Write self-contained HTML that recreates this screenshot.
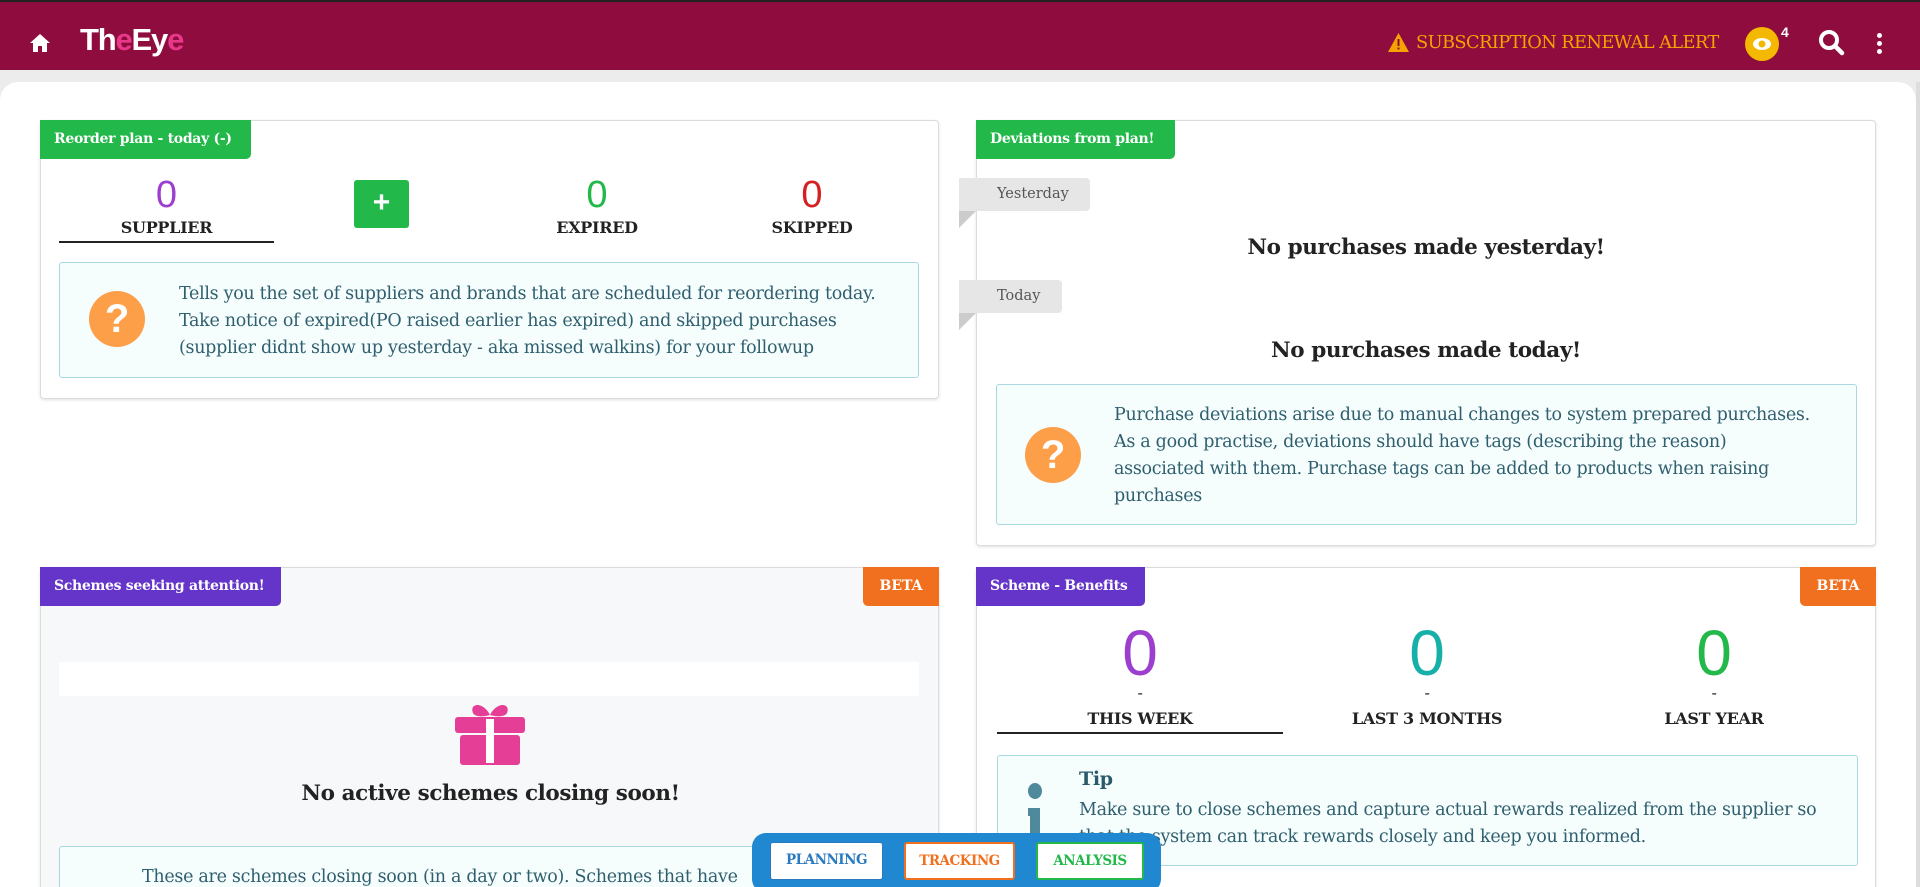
<!DOCTYPE html>
<html><head><meta charset="utf-8"><style>
*{box-sizing:border-box;margin:0;padding:0}
html,body{width:1920px;height:887px;overflow:hidden}
body{background:#ececec;font-family:"DejaVu Serif","Liberation Serif",serif;color:#222;position:relative}
.hdr{position:absolute;left:0;top:0;width:1920px;height:70px;background:#8f0d3e;border-top:2px solid #222}
.panel{position:absolute;left:0;top:82px;width:1916px;height:805px;background:#fff;border-radius:18px 18px 0 0}
.card{position:absolute;background:#fff;border:1px solid #dcdcdc;border-radius:4px;box-shadow:0 1px 3px rgba(0,0,0,.12)}
.tab{position:absolute;top:-1px;left:-1px;height:39px;color:#fff;font-weight:bold;font-size:14px;line-height:39px;padding:0 14px;border-radius:0 0 5px 0;letter-spacing:-.3px}
.beta{position:absolute;top:-1px;right:-1px;height:39px;width:76px;background:#f07020;color:#fff;font-weight:bold;font-size:14px;line-height:39px;text-align:center;border-radius:0 0 0 5px}
.abs{position:absolute}
.num{position:absolute;text-align:center;font-size:38px;font-family:"Liberation Sans",sans-serif;font-weight:300}
.lbl{position:absolute;text-align:center;font-size:16px;font-weight:bold;letter-spacing:-.3px}
.info{position:absolute;background:#f5fdfd;border:1.5px solid #a9d8e0;border-radius:3px;color:#2f5f6e;font-size:17.5px;line-height:27px;letter-spacing:-.3px}
.q{position:absolute;width:56px;height:56px;border-radius:50%;background:#fd9f48;color:#fff;font:bold 40px/56px "Liberation Sans",sans-serif;text-align:center}
.tag{position:absolute;background:#e6e6e6;color:#555;font-size:14.5px;line-height:33px;padding-left:38px;border-radius:0 4px 4px 0}
.tag:after{content:"";position:absolute;left:0;top:33px;border-left:17px solid #ccc;border-bottom:17px solid transparent}
.big{position:absolute;text-align:center;font-size:21.5px;font-weight:bold;letter-spacing:-.4px}
.nb{position:absolute;top:9px;height:38px;background:#fff;border-radius:3px;font:bold 13.5px/34px "DejaVu Serif",serif;text-align:center;letter-spacing:-.5px}
</style></head><body>
<div class="hdr">
 <svg class="abs" style="left:29px;top:31px" width="22" height="20" viewBox="0 0 22 20"><path d="M11 1L1 10h3v9h5v-6h4v6h5v-9h3z" fill="#fff"/></svg>
 <div class="abs" style="left:80px;top:20px;font:bold 31px/36px 'Liberation Sans',sans-serif;color:#fff;letter-spacing:-1.2px">Th<span style="color:#e8388a">e</span>Ey<span style="color:#e8388a">e</span></div>
 <svg class="abs" style="left:1388px;top:31px" width="21" height="19" viewBox="0 0 21 19"><path d="M10.5 0L21 19H0z" fill="#f5a300"/><rect x="9.5" y="6" width="2" height="7" fill="#8f0d3e"/><rect x="9.5" y="14.5" width="2" height="2" fill="#8f0d3e"/></svg>
 <div class="abs" style="left:1416px;top:29px;font:17.8px/24px 'DejaVu Serif',serif;color:#f5a300;letter-spacing:-.6px">SUBSCRIPTION RENEWAL ALERT</div>
 <div class="abs" style="left:1745px;top:25px;width:34px;height:34px;border-radius:50%;background:#f5b800"></div>
 <svg class="abs" style="left:1752px;top:34px" width="20" height="16" viewBox="0 0 20 16"><ellipse cx="10" cy="8" rx="9" ry="6" fill="#fff"/><circle cx="10" cy="8" r="3.5" fill="#f5b800"/></svg>
 <div class="abs" style="left:1781px;top:22px;font:bold 14px 'Liberation Sans',sans-serif;color:#fff">4</div>
 <svg class="abs" style="left:1818px;top:27px" width="27" height="27" viewBox="0 0 27 27"><circle cx="11" cy="11" r="8" stroke="#fff" stroke-width="4" fill="none"/><path d="M17 17l7 7" stroke="#fff" stroke-width="4.5" stroke-linecap="round"/></svg>
 <div class="abs" style="left:1877px;top:31px;width:5px;height:5px;border-radius:50%;background:#fff;box-shadow:0 8px 0 #fff,0 16px 0 #fff"></div>
</div>
<div class="panel"></div>
<div class="abs" style="left:1916px;top:82px;width:4px;height:805px;background:#ddd"></div>

<!-- card 1 -->
<div class="card" style="left:40px;top:120px;width:899px;height:279px">
 <div class="tab" style="background:#22b84a;width:211px">Reorder plan - today (-)</div>
 <div class="num" style="left:18px;width:215px;top:53px;color:#9c3fcf">0</div>
 <div class="lbl" style="left:18px;width:215px;top:97px">SUPPLIER</div>
 <div class="abs" style="left:18px;top:120px;width:215px;height:2px;background:#222"></div>
 <div class="abs" style="left:313px;top:59px;width:55px;height:48px;background:#22b84a;border-radius:3px;color:#fff;font:bold 30px/46px 'Liberation Sans',sans-serif;text-align:center">+</div>
 <div class="num" style="left:450px;width:212px;top:53px;color:#22b84a">0</div>
 <div class="lbl" style="left:450px;width:212px;top:97px">EXPIRED</div>
 <div class="num" style="left:665px;width:212px;top:53px;color:#d42020">0</div>
 <div class="lbl" style="left:665px;width:212px;top:97px">SKIPPED</div>
 <div class="info" style="left:18px;top:141px;width:860px;height:116px">
  <div class="q" style="left:29px;top:28px">?</div>
  <div class="abs" style="left:119px;top:18px;width:730px">Tells you the set of suppliers and brands that are scheduled for reordering today. Take notice of expired(PO raised earlier has expired) and skipped purchases (supplier didnt show up yesterday - aka missed walkins) for your followup</div>
 </div>
</div>

<!-- card 2 -->
<div class="card" style="left:976px;top:120px;width:900px;height:426px">
 <div class="tab" style="background:#22b84a;width:199px">Deviations from plan!</div>
</div>
<div class="tag" style="left:959px;top:178px;width:131px">Yesterday</div>
<div class="big" style="left:976px;width:900px;top:235px">No purchases made yesterday!</div>
<div class="tag" style="left:959px;top:280px;width:103px">Today</div>
<div class="big" style="left:976px;width:900px;top:338px">No purchases made today!</div>
<div class="info" style="left:996px;top:384px;width:861px;height:141px">
 <div class="q" style="left:28px;top:42px">?</div>
 <div class="abs" style="left:117px;top:17px;width:700px">Purchase deviations arise due to manual changes to system prepared purchases. As a good practise, deviations should have tags (describing the reason) associated with them. Purchase tags can be added to products when raising purchases</div>
</div>

<!-- card 3 -->
<div class="card" style="left:40px;top:567px;width:899px;height:330px;background:#f7f8fa">
 <div class="tab" style="background:#6535c9;width:241px">Schemes seeking attention!</div>
 <div class="beta">BETA</div>
 <div class="abs" style="left:18px;top:94px;width:860px;height:34px;background:#fff"></div>
 <svg class="abs" style="left:412px;top:133px" width="74" height="64" viewBox="0 0 74 64"><path d="M37 14C30 0 16 2 20 12c2 4 10 4 17 2zM37 14C44 0 58 2 54 12c-2 4-10 4-17 2z" fill="#e53e97"/><rect x="2" y="16" width="70" height="16" rx="3" fill="#e53e97"/><rect x="7" y="34" width="60" height="30" rx="3" fill="#e53e97"/><rect x="33" y="18" width="8" height="44" fill="#fff"/></svg>
 <div class="big" style="left:0;width:899px;top:213px">No active schemes closing soon!</div>
 <div class="info" style="left:18px;top:278px;width:860px;height:80px"><div class="abs" style="left:82px;top:17px;width:760px">These are schemes closing soon (in a day or two). Schemes that have</div></div>
</div>

<!-- card 4 -->
<div class="card" style="left:976px;top:567px;width:900px;height:330px">
 <div class="tab" style="background:#6535c9;width:169px">Scheme - Benefits</div>
 <div class="beta">BETA</div>
 <div class="num" style="left:20px;width:286px;top:48px;font-size:64px;color:#9c3fcf">0</div>
 <div class="num" style="left:307px;width:286px;top:48px;font-size:64px;color:#16b0a8">0</div>
 <div class="num" style="left:594px;width:286px;top:48px;font-size:64px;color:#22b84a">0</div>
 <div class="lbl" style="left:20px;width:286px;top:115px;font-weight:normal">-</div>
 <div class="lbl" style="left:307px;width:286px;top:115px;font-weight:normal">-</div>
 <div class="lbl" style="left:594px;width:286px;top:115px;font-weight:normal">-</div>
 <div class="lbl" style="left:20px;width:286px;top:141px">THIS WEEK</div>
 <div class="lbl" style="left:307px;width:286px;top:141px">LAST 3 MONTHS</div>
 <div class="lbl" style="left:594px;width:286px;top:141px">LAST YEAR</div>
 <div class="abs" style="left:20px;top:164px;width:286px;height:2px;background:#222"></div>
 <div class="info" style="left:20px;top:187px;width:861px;height:111px">
  <svg class="abs" style="left:27px;top:26px" width="20" height="70" viewBox="0 0 20 70"><ellipse cx="10" cy="9" rx="7" ry="8" fill="#4f8a9c"/><path d="M3 26h12v44H5V34H3z" fill="#4f8a9c"/></svg>
  <div class="abs" style="left:81px;top:10px;font-size:19px;font-weight:bold;color:#2a5a6a">Tip</div>
  <div class="abs" style="left:81px;top:41px;width:770px">Make sure to close schemes and capture actual rewards realized from the supplier so that the system can track rewards closely and keep you informed.</div>
 </div>
</div>

<!-- bottom nav -->
<div class="abs" style="left:752px;top:833px;width:409px;height:60px;background:#2088d0;border-radius:14px">
 <div class="nb" style="left:18px;width:113px;color:#2a7ac0;border:1px solid #2a7ac0">PLANNING</div>
 <div class="nb" style="left:152px;width:111px;color:#f07020;border:2px solid #f07020">TRACKING</div>
 <div class="nb" style="left:284px;width:108px;color:#22b84a;border:2px solid #22b84a">ANALYSIS</div>
</div>
</body></html>
